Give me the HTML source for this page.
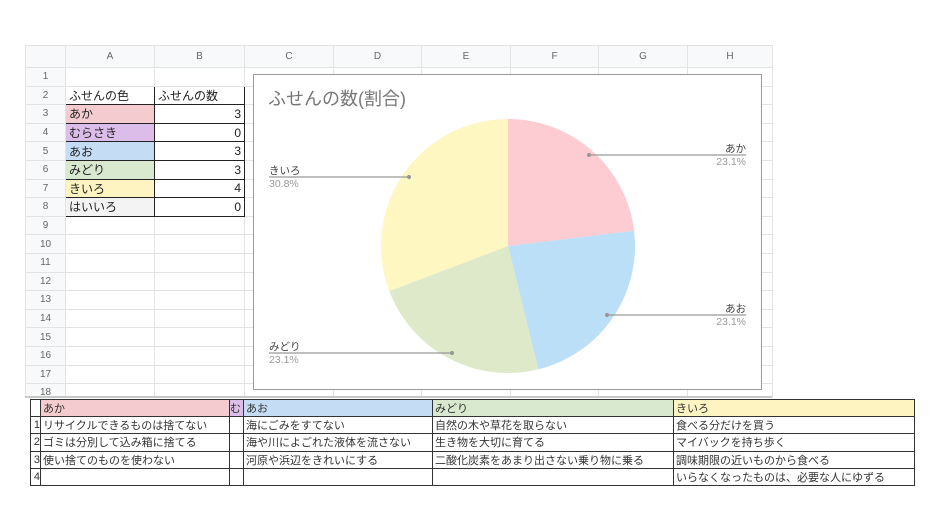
<!DOCTYPE html>
<html><head><meta charset="utf-8"><style>
body{margin:0;width:940px;height:529px;background:#fff;position:relative;overflow:hidden;font-family:"Liberation Sans","Noto Sans CJK JP",sans-serif;}
.a{position:absolute}
table{border-collapse:collapse;position:absolute;table-layout:fixed}
#g td{border:1px solid #e2e3e3;height:17.6px;padding:0 3px;font-size:12px;color:#222;white-space:nowrap;overflow:hidden}
#g tr.h td{background:#f8f9fa;color:#666;font-size:10px;text-align:center;height:21px}
#g td.n{background:#f8f9fa;color:#666;font-size:10px;text-align:center}
#d td{border:1px solid #333;height:16.2px;padding:0 2px;font-size:11px;color:#333;white-space:nowrap;overflow:hidden}
</style></head><body>
<table id="g" style="left:25px;top:45px;width:747px">
<colgroup><col style="width:40px"><col style="width:89px"><col style="width:90px"><col style="width:89px"><col style="width:88px"><col style="width:89px"><col style="width:88px"><col style="width:89px"><col style="width:85px"></colgroup>
<tr class="h"><td></td><td>A</td><td>B</td><td>C</td><td>D</td><td>E</td><td>F</td><td>G</td><td>H</td></tr>
<tr><td class="n">1</td><td></td><td></td><td></td><td></td><td></td><td></td><td></td><td></td></tr>
<tr><td class="n">2</td><td style="border:1px solid #222">ふせんの色</td><td style="border:1px solid #222">ふせんの数</td><td></td><td></td><td></td><td></td><td></td><td></td></tr>
<tr><td class="n">3</td><td style="border:1px solid #222;background:#f4ccd0">あか</td><td style="border:1px solid #222;text-align:right">3</td><td></td><td></td><td></td><td></td><td></td><td></td></tr>
<tr><td class="n">4</td><td style="border:1px solid #222;background:#dcbde9">むらさき</td><td style="border:1px solid #222;text-align:right">0</td><td></td><td></td><td></td><td></td><td></td><td></td></tr>
<tr><td class="n">5</td><td style="border:1px solid #222;background:#c5ddf4">あお</td><td style="border:1px solid #222;text-align:right">3</td><td></td><td></td><td></td><td></td><td></td><td></td></tr>
<tr><td class="n">6</td><td style="border:1px solid #222;background:#d9e9cf">みどり</td><td style="border:1px solid #222;text-align:right">3</td><td></td><td></td><td></td><td></td><td></td><td></td></tr>
<tr><td class="n">7</td><td style="border:1px solid #222;background:#fdf4c2">きいろ</td><td style="border:1px solid #222;text-align:right">4</td><td></td><td></td><td></td><td></td><td></td><td></td></tr>
<tr><td class="n">8</td><td style="border:1px solid #222;background:#f3f3f3">はいいろ</td><td style="border:1px solid #222;text-align:right">0</td><td></td><td></td><td></td><td></td><td></td><td></td></tr>
<tr><td class="n">9</td><td></td><td></td><td></td><td></td><td></td><td></td><td></td><td></td></tr>
<tr><td class="n">10</td><td></td><td></td><td></td><td></td><td></td><td></td><td></td><td></td></tr>
<tr><td class="n">11</td><td></td><td></td><td></td><td></td><td></td><td></td><td></td><td></td></tr>
<tr><td class="n">12</td><td></td><td></td><td></td><td></td><td></td><td></td><td></td><td></td></tr>
<tr><td class="n">13</td><td></td><td></td><td></td><td></td><td></td><td></td><td></td><td></td></tr>
<tr><td class="n">14</td><td></td><td></td><td></td><td></td><td></td><td></td><td></td><td></td></tr>
<tr><td class="n">15</td><td></td><td></td><td></td><td></td><td></td><td></td><td></td><td></td></tr>
<tr><td class="n">16</td><td></td><td></td><td></td><td></td><td></td><td></td><td></td><td></td></tr>
<tr><td class="n">17</td><td></td><td></td><td></td><td></td><td></td><td></td><td></td><td></td></tr>
<tr><td class="n">18</td><td></td><td></td><td></td><td></td><td></td><td></td><td></td><td></td></tr>
</table>
<div class="a" style="left:0;top:398px;width:940px;height:131px;background:#fff"></div>
<svg class="a" style="left:253px;top:74px" width="510" height="316" viewBox="253 74 510 316">
<rect x="253.5" y="74.5" width="508" height="315" fill="#fff" stroke="#9a9a9a"/>
<text x="268" y="105" font-size="18" fill="#777" font-family="Liberation Sans,Noto Sans CJK JP,sans-serif">ふせんの数(割合)</text>
<path d="M508 246 L508 119 A127 127 0 0 1 634.1 230.7Z" fill="#fdccd3"/>
<path d="M508 246 L634.1 230.7 A127 127 0 0 1 538.3 369.3Z" fill="#bcdff8"/>
<path d="M508 246 L538.3 369.3 A127 127 0 0 1 389.3 291.1Z" fill="#dde9c8"/>
<path d="M508 246 L389.3 291.1 A127 127 0 0 1 508 119Z" fill="#fef7c2"/>
<g stroke="#999" stroke-width="1.2" fill="#999">
<line x1="589" y1="155" x2="746" y2="155"/><circle cx="589" cy="155" r="1.5"/>
<line x1="607" y1="315" x2="746" y2="315"/><circle cx="607" cy="315" r="1.5"/>
<line x1="269" y1="177" x2="409" y2="177"/><circle cx="409" cy="177" r="1.5"/>
<line x1="269" y1="353" x2="452" y2="353"/><circle cx="452" cy="353" r="1.5"/>
</g>
<g font-size="10.5" font-family="Liberation Sans,Noto Sans CJK JP,sans-serif">
<text x="746" y="152" text-anchor="end" fill="#444">あか</text><text x="746" y="165" text-anchor="end" fill="#999">23.1%</text>
<text x="746" y="312" text-anchor="end" fill="#444">あお</text><text x="746" y="325" text-anchor="end" fill="#999">23.1%</text>
<text x="269" y="174" fill="#444">きいろ</text><text x="269" y="187" fill="#999">30.8%</text>
<text x="269" y="350" fill="#444">みどり</text><text x="269" y="363" fill="#999">23.1%</text>
</g>
</svg>
<div class="a" style="left:25px;top:396px;width:747px;height:2px;background:#c8c8c8"></div>
<table id="d" style="left:30px;top:399px;width:884px">
<colgroup><col style="width:10px"><col style="width:189px"><col style="width:14px"><col style="width:189px"><col style="width:241px"><col style="width:241px"></colgroup>
<tr><td></td><td style="background:#f4ccd0">あか</td><td style="background:#dcbde9;padding:0">む</td><td style="background:#c5ddf4">あお</td><td style="background:#d9e9cf">みどり</td><td style="background:#fdf4c2">きいろ</td></tr>
<tr><td style="padding:0;text-align:right">1</td><td>リサイクルできるものは捨てない</td><td></td><td>海にごみをすてない</td><td>自然の木や草花を取らない</td><td>食べる分だけを買う</td></tr>
<tr><td style="padding:0;text-align:right">2</td><td>ゴミは分別して込み箱に捨てる</td><td></td><td>海や川によごれた液体を流さない</td><td>生き物を大切に育てる</td><td>マイバックを持ち歩く</td></tr>
<tr><td style="padding:0;text-align:right">3</td><td>使い捨てのものを使わない</td><td></td><td>河原や浜辺をきれいにする</td><td>二酸化炭素をあまり出さない乗り物に乗る</td><td>調味期限の近いものから食べる</td></tr>
<tr><td style="padding:0;text-align:right">4</td><td></td><td></td><td></td><td></td><td>いらなくなったものは、必要な人にゆずる</td></tr>
</table>
</body></html>
